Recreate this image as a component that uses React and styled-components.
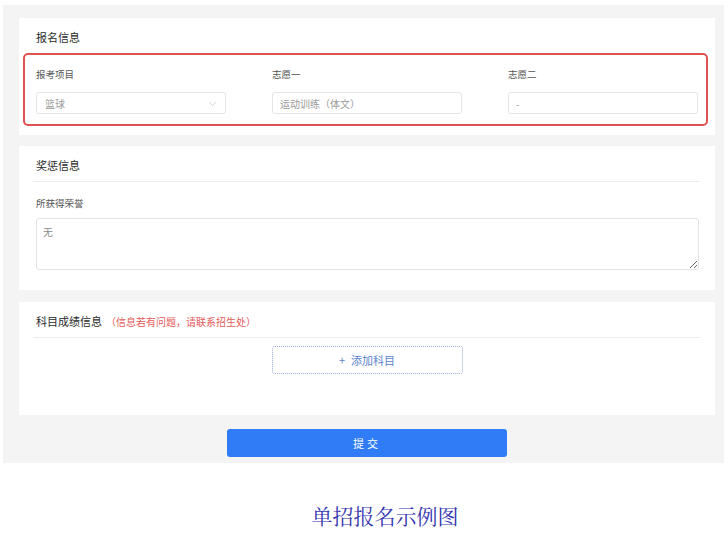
import React from "react";
import styled, { createGlobalStyle } from "styled-components";

const GlobalStyle = createGlobalStyle`
    html, body {
        margin: 0;
        padding: 0;
        background: #ffffff;
    }
    body {
        font-family: "Noto Sans CJK SC", "Noto Sans", sans-serif;
    }
`;

const Page = styled.div`
    width: 728px;
    height: 535px;
    padding-top: 5px;
    box-sizing: border-box;
`;

const Panel = styled.div`
    margin-left: 3px;
    width: 721px;
    padding: 13px 9px 6px 16px;
    box-sizing: border-box;
    background: #f4f4f4;
`;

const Card = styled.section`
    display: flow-root;
    background: #ffffff;
    padding: 11px 0 ${(props) => props.bottom || 0}px;
    margin-bottom: ${(props) => props.gap || 0}px;
`;

const Title = styled.h3`
    display: flex;
    align-items: baseline;
    height: 16px;
    margin: 0 0 0 17px;
    font-size: 11px;
    font-weight: 400;
    line-height: 16px;
    color: #2a2a2a;
`;

const Note = styled.span`
    margin-left: 4px;
    font-size: 10px;
    line-height: 16px;
    color: #e45a5a;
`;

const Divider = styled.div`
    height: 1px;
    margin: 8px 15px 0 14px;
    background: #ebebeb;
`;

const Highlight = styled.div`
    margin: 8px 7px 0 4px;
    padding: 12px 0 10px 11px;
    border: 2px solid #e05252;
    border-radius: 5px;
    display: grid;
    grid-template-columns: 236px 236px 1fr;
`;

const Field = styled.div`
    display: flex;
    flex-direction: column;
    gap: 11px;
`;

const Label = styled.label`
    font-size: 9.5px;
    line-height: 14px;
    color: #555555;
`;

const Box = styled.div`
    position: relative;
    width: 190px;
    height: 22px;
    box-sizing: border-box;
    border: 1px solid #e4e4e4;
    border-radius: 3px;
    padding-left: ${(props) => props.pad || 7}px;
    display: flex;
    align-items: center;
    font-size: 10px;
    color: #9a9a9a;
`;

const Chevron = styled.svg`
    position: absolute;
    right: 8px;
    top: 8px;
`;

const Block = styled.div`
    padding: 14px 17px 0;
    display: flex;
    flex-direction: column;
    gap: 8px;
`;

const Area = styled.textarea`
    width: 663px;
    height: 52px;
    box-sizing: border-box;
    border: 1px solid #e4e4e4;
    border-radius: 3px;
    padding: 5px 6px;
    font-family: "Noto Sans CJK SC", sans-serif;
    font-size: 10px;
    color: #8a8a8a;
    resize: vertical;
    outline: none;
`;

const AddRow = styled.div`
    display: flex;
    justify-content: center;
    padding-top: 8px;
`;

const AddButton = styled.button`
    width: 191px;
    height: 28px;
    border: 1px dotted #98acd6;
    border-radius: 3px;
    background: #ffffff;
    color: #5a84cc;
    font-family: "Noto Sans CJK SC", sans-serif;
    font-size: 11px;
    display: flex;
    align-items: center;
    justify-content: center;
    gap: 6px;
`;

const SubmitRow = styled.div`
    display: flex;
    justify-content: center;
    padding-top: 14px;
`;

const Submit = styled.button`
    width: 280px;
    height: 28px;
    border: 0;
    border-radius: 3px;
    background: #2f7cf6;
    color: #ffffff;
    font-family: "Noto Sans CJK SC", sans-serif;
    font-size: 11px;
    letter-spacing: 3px;
`;

const Caption = styled.div`
    margin-top: 42px;
    padding-left: 42px;
    text-align: center;
    font-family: "Liberation Serif", "Noto Serif CJK SC", "Noto Sans CJK SC", serif;
    font-size: 21px;
    line-height: 24px;
    color: #3434b0;
`;

function App() {
    return (
        <Page>
            <GlobalStyle />
            <Panel>
                <Card gap={11} bottom={9}>
                    <Title>报名信息</Title>
                    <Highlight>
                        <Field>
                            <Label>报考项目</Label>
                            <Box pad={8}>
                                篮球
                                <Chevron width="9" height="6" viewBox="0 0 9 6">
                                    <path d="M1 1 L4.5 4.5 L8 1" fill="none" stroke="#cfcfcf" strokeWidth="0.8" />
                                </Chevron>
                            </Box>
                        </Field>
                        <Field>
                            <Label>志愿一</Label>
                            <Box>运动训练（体文）</Box>
                        </Field>
                        <Field>
                            <Label>志愿二</Label>
                            <Box>-</Box>
                        </Field>
                    </Highlight>
                </Card>
                <Card gap={12} bottom={20}>
                    <Title>奖惩信息</Title>
                    <Divider />
                    <Block>
                        <Label>所获得荣誉</Label>
                        <Area readOnly value="无" />
                    </Block>
                </Card>
                <Card bottom={41}>
                    <Title>
                        科目成绩信息
                        <Note>（信息若有问题，请联系招生处）</Note>
                    </Title>
                    <Divider />
                    <AddRow>
                        <AddButton>
                            <span>+</span>
                            <span>添加科目</span>
                        </AddButton>
                    </AddRow>
                </Card>
                <SubmitRow>
                    <Submit>提交</Submit>
                </SubmitRow>
            </Panel>
            <Caption>单招报名示例图</Caption>
        </Page>
    );
}

export default App;
